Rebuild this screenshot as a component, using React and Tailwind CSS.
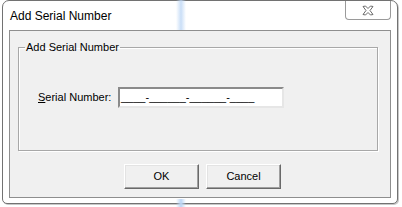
import React from "react";

const CloseGlyph = () => (
  <svg width="12" height="11" viewBox="0 0 12 11">
    <path
      d="M1 1.5 L3.5 1 L6 3.5 L8.5 1 L11 1.5 L8 5.5 L11 9.5 L8.5 10 L6 7.5 L3.5 10 L1 9.5 L4 5.5 Z"
      fill="#ffffff"
      stroke="#6b6b6b"
      strokeWidth="1"
      strokeLinejoin="round"
    />
  </svg>
);

const DlgButton = ({ children }) => (
  <button
    type="button"
    className="w-[75px] h-[25px] bg-[#f0f0f0] border border-t-white border-l-white border-r-[#696969] border-b-[#696969] shadow-[inset_-1px_-1px_0_#a0a0a0,inset_1px_1px_0_#e3e3e3] text-[11px] text-black leading-none"
  >
    {children}
  </button>
);

export default function App() {
  return (
    <div
      className="relative w-[402px] h-[207px] bg-white overflow-hidden"
      style={{ fontFamily: '"Liberation Sans", Arial, sans-serif' }}
    >
      {/* glass streak behind the window */}
      <div className="absolute left-[176px] top-0 w-[10px] h-[30px] bg-gradient-to-r from-transparent via-[#bcd6f5] to-transparent opacity-80 z-10" />
      <div className="absolute left-[176px] top-[199px] w-[10px] h-[8px] bg-gradient-to-r from-transparent via-[#bcd6f5] to-transparent z-10" />

      <div className="ml-[2px] w-[396px] h-[204px] flex flex-col border border-[#727272] rounded-t-[7px] rounded-b-[5px] bg-white shadow-[1px_1px_0_#c8c8c8]">
        {/* title bar */}
        <div className="h-[29px] flex items-start justify-between">
          <div className="pl-[7px] pt-[8px] text-[12px] leading-[14px] text-black">
            Add Serial Number
          </div>
          <div className="mr-[6px] w-[46px] h-[19px] flex items-center justify-center border border-t-0 border-[#9a9a9a] rounded-b-[4px] bg-white">
            <CloseGlyph />
          </div>
        </div>

        {/* client area */}
        <div className="mx-[6px] h-[168px] border border-[#8e8e8e] bg-[#f0f0f0] flex flex-col">
          <fieldset className="mt-[10px] ml-[8px] mr-[12px] h-[110px] border border-[#a8a8a8] shadow-[inset_1px_1px_0_#ffffff,1px_1px_0_#ffffff] px-0">
            <legend className="ml-[6px] px-[1px] text-[11px] leading-[13px] text-black">
              Add Serial Number
            </legend>
            <div className="mt-[33px] ml-[19px] flex items-center">
              <span className="w-[80px] text-[11px] text-black">
                <span className="underline">S</span>erial Number:
              </span>
              <div className="w-[166px] h-[21px] border-2 border-t-[#8a8a8a] border-l-[#8a8a8a] border-r-[#e6e6e6] border-b-[#e6e6e6] bg-white flex items-center pl-[1px]">
                <span className="text-[11px] leading-none text-black whitespace-pre">
                  ____-______-______-____
                </span>
              </div>
            </div>
          </fieldset>

          <div className="mt-[13px] ml-[114px] flex gap-[7px]">
            <DlgButton>OK</DlgButton>
            <DlgButton>Cancel</DlgButton>
          </div>
        </div>
      </div>
    </div>
  );
}
